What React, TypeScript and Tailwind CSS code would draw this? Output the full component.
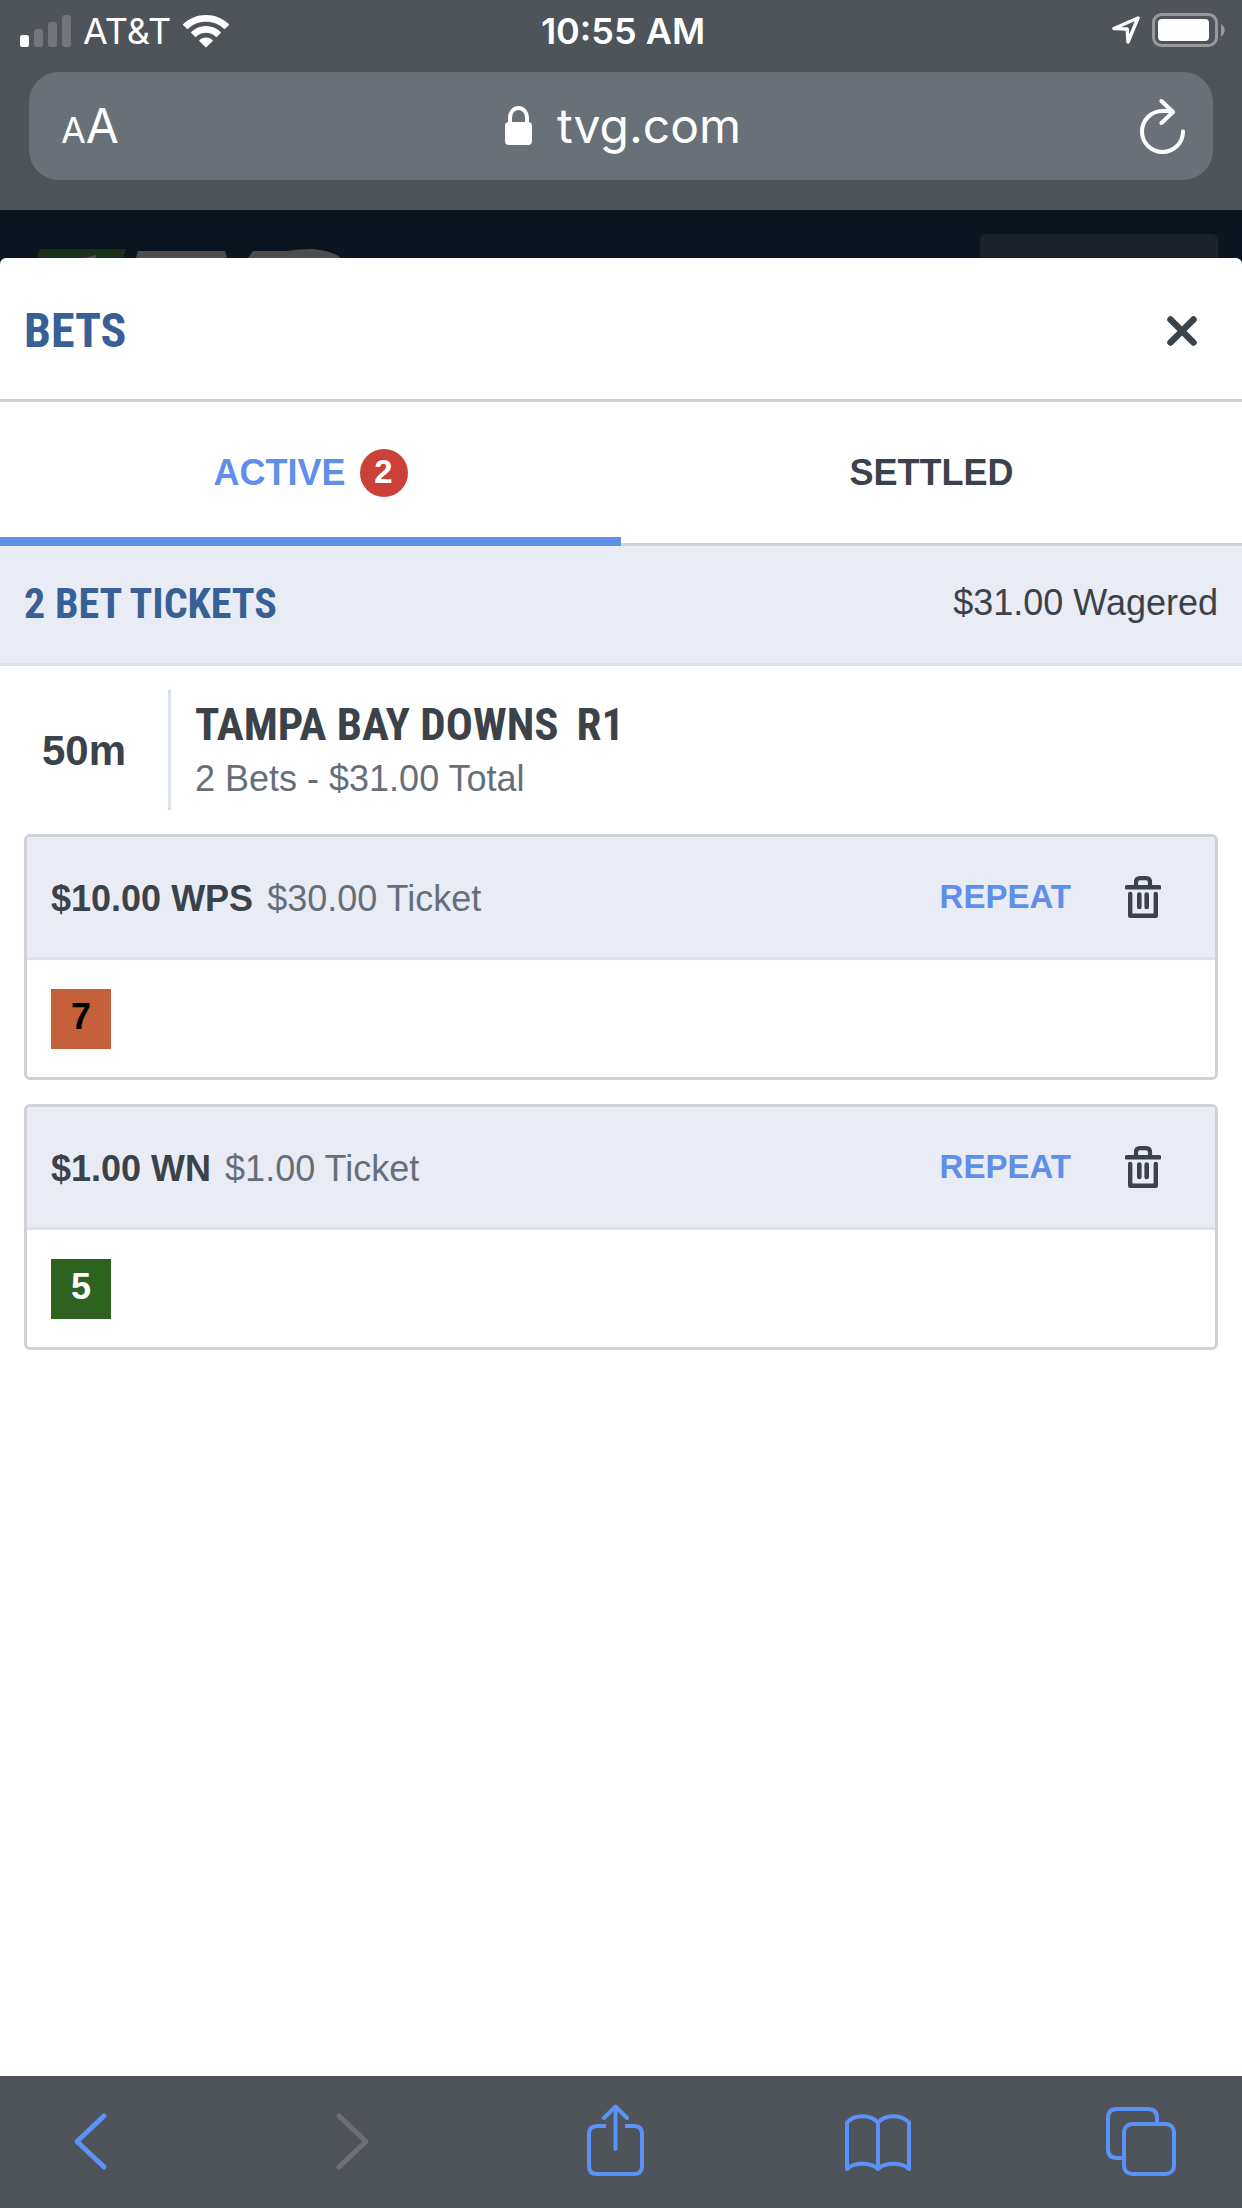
import type { ReactNode } from 'react';

interface Bet {
    amount: string;
    type: string;
    cost: string;
    runner: string;
    runnerClass: string;
}

const bets: Bet[] = [
    { amount: '$10.00', type: 'WPS', cost: '$30.00', runner: '7', runnerClass: 'bg-[#c5613a] text-black' },
    { amount: '$1.00', type: 'WN', cost: '$1.00', runner: '5', runnerClass: 'bg-[#2e631f] text-white' },
];

const SignalIcon = () => (
    <svg width="51" height="32" viewBox="0 0 51 32" fill="#727579">
        <rect x="0" y="20" width="9" height="12" rx="2.5" fill="#fff" />
        <rect x="14" y="14" width="9" height="18" rx="2.5" />
        <rect x="28" y="7" width="9" height="25" rx="2.5" />
        <rect x="42" y="0" width="9" height="32" rx="2.5" />
    </svg>
);

const WifiIcon = () => (
    <svg width="46" height="33" viewBox="0 0 46 33" fill="#fff">
        <path d="M23 0C14.200 0 6.200 3.400.300 9c-.4.400-.4.900 0 1.200l3.600 3.600c.4.400.9.400 1.200 0C9.800 9.400 16 6.800 23 6.800s13.200 2.600 17.900 7c.4.400.9.400 1.200 0l3.600-3.600c.4-.4.400-.9 0-1.200C39.800 3.400 31.800 0 23 0z" />
        <path d="M23 11c-5.700 0-10.900 2.200-14.700 5.900-.4.400-.4.800 0 1.200l3.700 3.600c.3.400.8.400 1.200 0C15.800 19.300 19.200 17.800 23 17.800s7.200 1.500 9.800 3.900c.4.400.9.400 1.200 0l3.700-3.600c.4-.4.400-.8 0-1.200C33.900 13.200 28.700 11 23 11z" />
        <path d="M23 22.500c-2.500 0-4.800 1-6.500 2.500-.4.400-.4.900 0 1.200l5.900 5.900c.4.400.8.400 1.200 0l5.900-5.900c.4-.3.400-.8 0-1.200-1.700-1.500-4-2.500-6.500-2.500z" />
    </svg>
);

const LocationIcon = () => (
    <svg width="28" height="28" viewBox="0 0 28 28" fill="none" stroke="#fff" strokeWidth="3.400" strokeLinejoin="round">
        <path d="M26 2 2 12.500 15.200 13 16 26z" />
    </svg>
);

const BatteryIcon = () => (
    <svg width="74" height="34" viewBox="0 0 74 34">
        <rect x="1.500" y="1.500" width="63" height="31" rx="8" fill="none" stroke="#97999c" strokeWidth="3" />
        <rect x="6" y="6" width="51" height="22" rx="4" fill="#fff" />
        <path d="M69 11c5 2.500 5 10 0 12.500z" fill="#97999c" />
    </svg>
);

const LockIcon = () => (
    <svg width="28" height="40" viewBox="0 0 28 40">
        <rect x="0" y="16" width="27" height="23" rx="4" fill="#fff" />
        <path d="M5 18V11.500a8.500 9.500 0 0 1 17 0V18" fill="none" stroke="#fff" strokeWidth="4" />
    </svg>
);

const ReloadIcon = () => (
    <svg width="45" height="55" viewBox="0 0 45 55" fill="none" stroke="#fff" strokeWidth="4" strokeLinecap="round" strokeLinejoin="round">
        <path d="M43 32.500A20.500 20.500 0 1 1 22.500 12H32" />
        <path d="M21.500 2 33 13 21.500 24" />
    </svg>
);

const CloseIcon = () => (
    <svg width="30" height="30" viewBox="0 0 30 30" stroke="#3b424a" strokeWidth="6.500" strokeLinecap="round">
        <path d="M3.500 3.500 26.500 26.500M26.500 3.500 3.500 26.500" />
    </svg>
);

const TrashIcon = () => (
    <svg width="36" height="42" viewBox="0 0 36 42" fill="none" stroke="#3b424a">
        <path d="M11 10V6.500Q11 2.200 15 2.200H21Q25 2.200 25 6.500V10" strokeWidth="4.200" />
        <path d="M2 11.300H34" strokeWidth="4.600" strokeLinecap="round" />
        <path d="M5.200 18V39.800H30.800V18" strokeWidth="4.400" strokeLinecap="round" strokeLinejoin="round" />
        <path d="M14.300 18.500V31M21.700 18.500V31" strokeWidth="4.600" strokeLinecap="round" />
    </svg>
);

const ToolbarIcon = ({ children, muted }: { children: ReactNode; muted?: boolean }) => (
    <svg
        width="72"
        height="74"
        viewBox="0 0 72 74"
        fill="none"
        stroke={muted ? '#6d7073' : '#5a92f8'}
        strokeWidth="4"
        strokeLinecap="round"
        strokeLinejoin="round"
    >
        {children}
    </svg>
);

const StatusBar = () => (
    <div className="grid h-[72px] grid-cols-[1fr_auto_1fr] items-start pr-4 pl-5 pt-[13px] font-['Inter',sans-serif] text-[36px] leading-[36px] text-white">
        <div className="flex items-center gap-3">
            <SignalIcon />
            <span>AT&amp;T</span>
            <WifiIcon />
        </div>
        <span className="font-semibold">10:55 AM</span>
        <div className="flex items-center justify-end gap-3">
            <LocationIcon />
            <BatteryIcon />
        </div>
    </div>
);

const AddressBar = () => (
    <div className="mx-[29px] grid h-[108px] grid-cols-[1fr_auto_1fr] items-center rounded-[30px] bg-[#6a7077] pr-7 pl-8 font-['Inter',sans-serif] text-[48px] text-white">
        <button aria-label="Page settings" className="flex items-baseline justify-self-start">
            <span className="text-[36px]">A</span>
            <span>A</span>
        </button>
        <button className="flex items-center gap-6">
            <LockIcon />
            <span>tvg.com</span>
        </button>
        <button aria-label="Reload" className="justify-self-end">
            <ReloadIcon />
        </button>
    </div>
);

// Part of the site header that stays visible above the sheet
const SiteHeader = () => (
    <div className="flex h-12 items-end justify-between pr-6 pl-[37px]">
        <svg width="306" height="9" viewBox="0 0 306 9">
            <path d="M3 0H89L86 9H0z" fill="#1b301b" />
            <path d="M47 9 59 6V9z" fill="#4d4d4d" />
            <path d="M101 2H188L190 9H99z" fill="#4d4d4d" />
            <path d="M216 2H250Q262 0 275 0Q296 2 304 9H211z" fill="#4d4d4d" />
        </svg>
        <div className="h-6 w-[238px] rounded-t-md bg-[#1b222a]" />
    </div>
);

const BetCard = ({ bet }: { bet: Bet }) => (
    <article className="overflow-hidden rounded-md border-[3px] border-[#d0d1d6]">
        <header className="flex h-[123px] items-center justify-between border-b-[3px] border-[#d9e2ed] bg-[#e9ecf4] pr-[54px] pl-6">
            <p className="flex gap-[14px] pt-1 text-[36px] text-[#666f79]">
                <strong className="text-[#3b424a]">
                    {bet.amount} {bet.type}
                </strong>
                <span>{bet.cost} Ticket</span>
            </p>
            <div className="flex items-center gap-[54px]">
                <button className="text-[33px] font-bold text-[#5f8fe8]">REPEAT</button>
                <button aria-label="Cancel bet">
                    <TrashIcon />
                </button>
            </div>
        </header>
        <div className="flex h-[117px] items-center px-6">
            <span className={`flex size-[60px] items-center justify-center pb-1 text-[36px] leading-[56px] font-bold ${bet.runnerClass}`}>
                {bet.runner}
            </span>
        </div>
    </article>
);

const Toolbar = () => (
    <nav className="flex h-[132px] items-start justify-between bg-[#4f545a] pt-7 pr-[65px] pl-[54px]">
        <button aria-label="Back">
            <ToolbarIcon>
                <path d="M50 12 23 37.500 50 63" strokeWidth="5" />
            </ToolbarIcon>
        </button>
        <button aria-label="Forward" disabled>
            <ToolbarIcon muted>
                <path d="M22 12 49 37.500 22 63" strokeWidth="5" />
            </ToolbarIcon>
        </button>
        <button aria-label="Share">
            <ToolbarIcon>
                <path d="M26 22H17Q9 22 9 30V62Q9 70 17 70H54Q62 70 62 62V30Q62 22 54 22H45" strokeLinecap="butt" />
                <path d="M35.500 45V3M24 14 35.500 2.500 47 14" />
            </ToolbarIcon>
        </button>
        <button aria-label="Bookmarks">
            <ToolbarIcon>
                <path d="M36 18.500C29 10 12 10 5 18.500V65C12 58 29 58 36 65C43 58 60 58 67 65V18.500C60 10 43 10 36 18.500V65" />
            </ToolbarIcon>
        </button>
        <button aria-label="Tabs">
            <ToolbarIcon>
                <path d="M18 54H12Q3 54 3 45V14Q3 5 12 5H43Q52 5 52 14V20" strokeLinecap="butt" />
                <rect x="19" y="20" width="50" height="50" rx="8" />
            </ToolbarIcon>
        </button>
    </nav>
);

export default function App() {
    return (
        <div className="flex min-h-screen flex-col bg-[#0b1520] font-['Liberation_Sans',Arial,sans-serif] text-[#3b424a]">
            <div className="h-[210px] bg-[#4f535a]">
                <StatusBar />
                <AddressBar />
            </div>
            <SiteHeader />

            <main className="flex-1 rounded-t-md bg-white">
                <header className="flex h-36 items-center justify-between border-b-[3px] border-[#d0d1d4] pt-1 pr-[45px] pl-6">
                    <h1 className="font-['Roboto_Condensed','Liberation_Sans_Narrow',Roboto,sans-serif] text-[48px] font-bold text-[#376096]">BETS</h1>
                    <button aria-label="Close">
                        <CloseIcon />
                    </button>
                </header>

                <div role="tablist" className="grid h-36 grid-cols-2 text-[36px] font-bold">
                    <button
                        role="tab"
                        aria-selected="true"
                        className="flex items-center justify-center gap-[14px] border-b-[9px] border-[#5f8fe8] pt-[6px] text-[#5f8fe8]"
                    >
                        ACTIVE
                        <span className="flex size-12 items-center justify-center rounded-full bg-[#cb4039] pb-[2px] text-[33px] text-white">2</span>
                    </button>
                    <button role="tab" aria-selected="false" className="border-b-[3px] border-[#d0d3d5]">
                        SETTLED
                    </button>
                </div>

                <div className="flex h-[120px] items-center justify-between border-b-[3px] border-[#d9e2ed] bg-[#e9ecf4] px-6 pb-[3px]">
                    <h2 className="font-['Roboto_Condensed','Liberation_Sans_Narrow',Roboto,sans-serif] text-[42px] font-bold text-[#376096]">2 BET TICKETS</h2>
                    <span className="text-[36px]">$31.00 Wagered</span>
                </div>

                <section className="p-6">
                    <div className="flex h-[120px]">
                        <div className="flex w-[147px] items-center justify-center border-r-[3px] border-[#d9e2ed] pr-6 text-[42px] font-bold">
                            50m
                        </div>
                        <div className="flex flex-col justify-center pl-6">
                            <h3 className="flex gap-[18px] font-['Roboto_Condensed','Liberation_Sans_Narrow',Roboto,sans-serif] text-[45px] leading-[57px] font-bold">
                                <span>TAMPA BAY DOWNS</span>
                                <span>R1</span>
                            </h3>
                            <p className="text-[36px] leading-[51px] text-[#666f79]">2 Bets - $31.00 Total</p>
                        </div>
                    </div>
                    <div className="mt-6 flex flex-col gap-6">
                        {bets.map((bet) => (
                            <BetCard key={bet.runner} bet={bet} />
                        ))}
                    </div>
                </section>
            </main>

            <Toolbar />
        </div>
    );
}
